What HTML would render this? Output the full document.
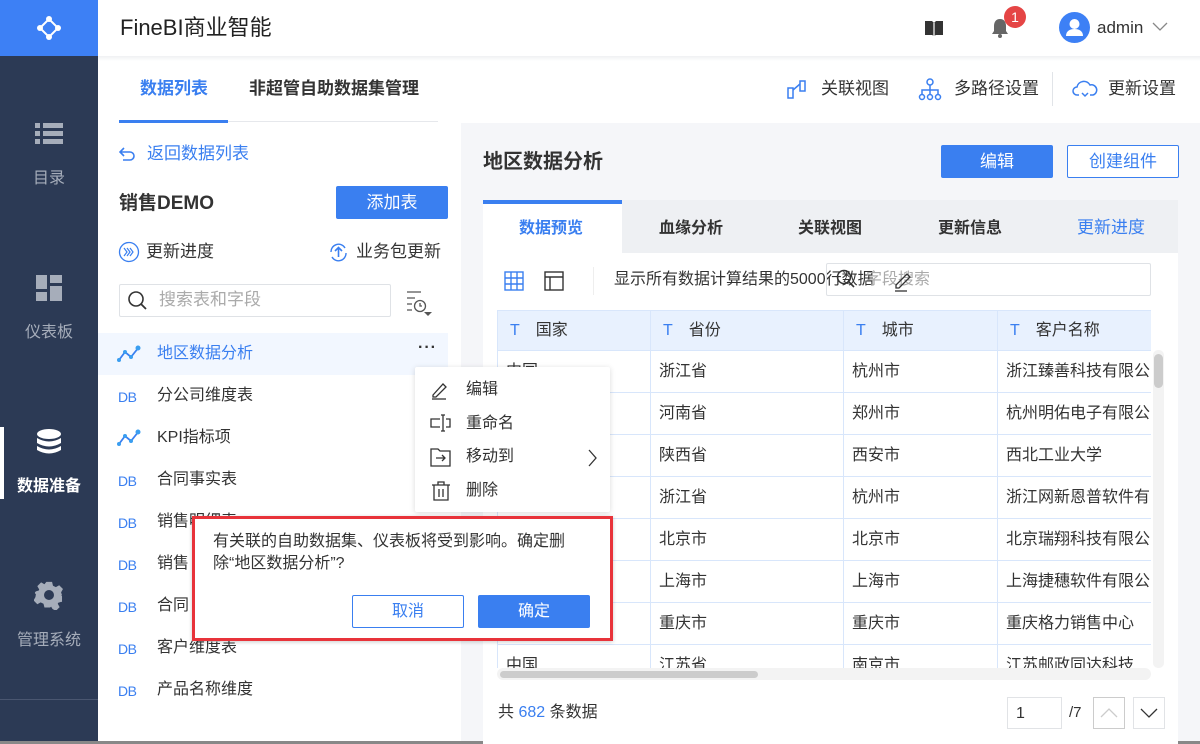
<!DOCTYPE html>
<html><head><meta charset="utf-8"><style>
*{margin:0;padding:0;box-sizing:border-box}
body{width:1200px;height:744px;overflow:hidden;position:relative;background:#fff;font-family:"Liberation Sans","Noto Sans CJK SC",sans-serif;color:#333;font-size:16px;line-height:1.2}
.a{position:absolute;white-space:nowrap}
.side{left:0;top:0;width:98px;height:744px;background:#2c3a55}
.logo{left:0;top:0;width:98px;height:56px;background:#3d80f5}
.nav{width:98px;text-align:center;color:#a6adba;font-size:16px}
.blue{color:#3a7ff0}
.row{left:98px;width:350px;height:42px}
.row .ic{position:absolute;left:20px;top:14px;font-size:14px;color:#3a7ff0;letter-spacing:-0.5px}
.row .t{position:absolute;left:59px;top:11px;font-size:16px;color:#333}
td{border:1px solid #d8e6fb;height:42px;padding-left:8px;font-size:16px;color:#333;white-space:nowrap;overflow:hidden}
th{border:1px solid #d8e6fb;height:40px;background:#e8f1fe;text-align:left;padding-left:12px;font-weight:normal;font-size:16px}
th b{color:#3a7ff0;font-weight:normal;margin-right:16px}
.btn{border-radius:2px;text-align:center}
</style></head><body>
<div class="a side"></div>
<div class="a logo"><svg width="98" height="56"><g fill="none" stroke="#fff" stroke-width="2"><path d="M40 28 L49 19 L58 28 L49 37 Z"/></g><g fill="#fff"><circle cx="40" cy="28" r="3"/><circle cx="49" cy="19" r="3"/><circle cx="58" cy="28" r="3"/><circle cx="49" cy="37" r="3"/></g></svg></div>
<svg class="a" style="left:35px;top:122px" width="28" height="24"><g fill="#a6adba"><rect x="0" y="1" width="5" height="5"/><rect x="8" y="1" width="20" height="5"/><rect x="0" y="9" width="5" height="5"/><rect x="8" y="9" width="20" height="5"/><rect x="0" y="17" width="5" height="5"/><rect x="8" y="17" width="20" height="5"/></g></svg>
<div class="a nav" style="top:169px">目录</div>
<svg class="a" style="left:36px;top:275px" width="26" height="26"><g fill="#a6adba"><rect x="0" y="0" width="11" height="14"/><rect x="14" y="0" width="12" height="8"/><rect x="0" y="17" width="11" height="9"/><rect x="14" y="11" width="12" height="15"/></g></svg>
<div class="a nav" style="top:323px">仪表板</div>
<div class="a" style="left:0;top:427px;width:4px;height:72px;background:#fff"></div>
<svg class="a" style="left:36px;top:429px" width="26" height="26"><g fill="#fff"><ellipse cx="13" cy="5" rx="12" ry="5"/><path d="M1 9 Q13 16 25 9 V14 Q13 21 1 14Z"/><path d="M1 17 Q13 24 25 17 V21 Q13 28 1 21Z"/></g></svg>
<div class="a nav" style="top:477px;color:#fff;font-weight:bold">数据准备</div>
<svg class="a" style="left:34px;top:580px" width="30" height="30" viewBox="0 0 30 30"><path fill="#a6adba" d="M12 2h6l1 4 3 1.5 3.5-2 4 4-2 3.5L28.5 16l-1 .5 1 .5v6h-1l-3 1-.5 1 2 3.5-4 4-3.5-2L17 28l-1 1h-6l-1-4-3-1.5-3.5 2-4-4 2-3.5L1 15l-1-1v-1l1-1 3-1 .5-1-2-3.5 4-4 3.5 2L12 2z" transform="scale(.95) translate(1,0)"/><circle cx="15" cy="15" r="5" fill="#2c3a55"/></svg>
<div class="a nav" style="top:631px">管理系统</div>
<div class="a" style="left:0;top:699px;width:98px;height:1px;background:#4a5670"></div>
<div class="a" style="left:0;top:741px;width:1200px;height:3px;background:#888"></div>

<div class="a" style="left:120px;top:15px;font-size:22px;color:#222">FineBI商业智能</div>
<svg class="a" style="left:924px;top:19px" width="20" height="18"><path d="M1 2h7l2 2 2-2h7v14h-7l-2 1-2-1H1z" fill="#333"/><path d="M10 4v13" stroke="#fff" stroke-width="1.2"/></svg>
<svg class="a" style="left:990px;top:17px" width="20" height="22"><path d="M10 2c-4 0-6 3-6 7v5l-2 3h16l-2-3V9c0-4-2-7-6-7z" fill="#666"/><circle cx="10" cy="19" r="2" fill="#666"/></svg>
<div class="a" style="left:1004px;top:6px;width:22px;height:22px;border-radius:11px;background:#e54545;color:#fff;font-size:14px;text-align:center;line-height:22px">1</div>
<div class="a" style="left:1059px;top:12px;width:31px;height:31px;border-radius:16px;background:#3d80f5"></div>
<svg class="a" style="left:1059px;top:12px" width="31" height="31"><circle cx="15.5" cy="12" r="5" fill="#fff"/><path d="M7 24c0-5 4-7 8.5-7s8.5 2 8.5 7z" fill="#fff"/></svg>
<div class="a" style="left:1097px;top:18px;font-size:17px;color:#333">admin</div>
<svg class="a" style="left:1152px;top:22px" width="16" height="10"><path d="M1 1l7 7 7-7" fill="none" stroke="#888" stroke-width="1.3"/></svg>
<div class="a" style="left:98px;top:56px;width:1102px;height:5px;background:linear-gradient(#f0f1f3,#fff)"></div>

<div class="a" style="left:140px;top:79px;font-size:17px;font-weight:bold;color:#3a7ff0">数据列表</div>
<div class="a" style="left:249px;top:79px;font-size:17px;font-weight:bold;color:#333">非超管自助数据集管理</div>
<div class="a" style="left:119px;top:121px;width:319px;height:1px;background:#e6e8ec"></div>
<div class="a" style="left:119px;top:120px;width:109px;height:3px;background:#3a7ff0"></div>
<svg class="a" style="left:786px;top:78px" width="22" height="22"><g fill="none" stroke="#3a7ff0" stroke-width="1.5"><rect x="2" y="10" width="5" height="10"/><rect x="14" y="3" width="5" height="10"/><path d="M7 12l7-6"/></g></svg>
<div class="a" style="left:821px;top:79px;font-size:17px">关联视图</div>
<svg class="a" style="left:918px;top:78px" width="24" height="24"><g fill="none" stroke="#3a7ff0" stroke-width="1.5"><circle cx="12" cy="4" r="3"/><circle cx="4" cy="19" r="2.5"/><circle cx="12" cy="19" r="2.5"/><circle cx="20" cy="19" r="2.5"/><path d="M12 7v9M4 16v-4h16v4"/></g></svg>
<div class="a" style="left:954px;top:79px;font-size:17px">多路径设置</div>
<div class="a" style="left:1052px;top:72px;width:1px;height:34px;background:#e1e4e8"></div>
<svg class="a" style="left:1072px;top:79px" width="26" height="20"><path d="M7 16H5a4 4 0 0 1 0-8 7 7 0 0 1 13-2 5 5 0 0 1 3 10h-3" fill="none" stroke="#3a7ff0" stroke-width="1.5"/><path d="M10 14l3 3 3-3" fill="none" stroke="#3a7ff0" stroke-width="1.5"/></svg>
<div class="a" style="left:1108px;top:79px;font-size:17px">更新设置</div>

<svg class="a" style="left:119px;top:146px" width="20" height="16"><path d="M5 2L1 6l4 4M1 6h10a4 4 0 0 1 0 8H4" fill="none" stroke="#3a7ff0" stroke-width="1.6"/></svg>
<div class="a blue" style="left:147px;top:144px;font-size:17px">返回数据列表</div>
<div class="a" style="left:119px;top:193px;font-size:19px;font-weight:bold;color:#333">销售DEMO</div>
<div class="a btn" style="left:336px;top:186px;width:112px;height:33px;background:#3a7ff0;color:#fff;font-size:17px;line-height:33px">添加表</div>
<svg class="a" style="left:118px;top:241px" width="22" height="22"><circle cx="11" cy="11" r="9.5" fill="none" stroke="#3a7ff0" stroke-width="1.3"/><path d="M6 7l3 4-3 4M9 7l3 4-3 4M12 7l3 4-3 4" fill="none" stroke="#3a7ff0" stroke-width="1.2"/></svg>
<div class="a" style="left:146px;top:242px;font-size:17px">更新进度</div>
<svg class="a" style="left:327px;top:241px" width="23" height="23"><path d="M4 11a7.5 7.5 0 0 1 14-4M19 12a7.5 7.5 0 0 1-14 4" fill="none" stroke="#3a7ff0" stroke-width="1.4"/><path d="M11.5 16V7M8 10l3.5-3.5L15 10" fill="none" stroke="#3a7ff0" stroke-width="1.6"/></svg>
<div class="a" style="left:356px;top:242px;font-size:17px">业务包更新</div>
<div class="a" style="left:119px;top:284px;width:272px;height:33px;border:1px solid #dfe2e6;border-radius:2px"></div>
<svg class="a" style="left:127px;top:290px" width="22" height="22"><circle cx="9" cy="9" r="7" fill="none" stroke="#333" stroke-width="1.6"/><path d="M14 14l5 5" stroke="#333" stroke-width="1.8"/></svg>
<div class="a" style="left:159px;top:290px;font-size:17px;color:#aaa">搜索表和字段</div>
<svg class="a" style="left:406px;top:290px" width="30" height="26"><g fill="none" stroke="#555" stroke-width="1.3"><path d="M1 2h14M1 8h8M1 14h5M1 20h5"/><circle cx="14" cy="16" r="5.5"/><path d="M14 13v3h2"/></g><path d="M18 22h8l-4 4z" fill="#555"/></svg>

<div class="a" style="left:98px;top:333px;width:350px;height:42px;background:#f2f7ff"></div>
<div class="a row" style="top:333px"><svg style="position:absolute;left:19px;top:12px" width="24" height="18"><path d="M2 15l6-8 6 5 8-10" fill="none" stroke="#3a7ff0" stroke-width="1.8"/><g fill="#3a9ef0"><circle cx="2" cy="15" r="2"/><circle cx="8" cy="7" r="2"/><circle cx="14" cy="12" r="2"/><circle cx="21" cy="3" r="2.5"/></g></svg><span class="t blue" style="color:#3a7ff0">地区数据分析</span><span class="t blue" style="left:320px;top:5px;font-weight:bold;letter-spacing:1px">···</span></div>
<div class="a row" style="top:375px"><span class="ic">DB</span><span class="t">分公司维度表</span></div>
<div class="a row" style="top:417px"><svg style="position:absolute;left:19px;top:12px" width="24" height="18"><path d="M2 15l6-8 6 5 8-10" fill="none" stroke="#3a7ff0" stroke-width="1.8"/><g fill="#3a9ef0"><circle cx="2" cy="15" r="2"/><circle cx="8" cy="7" r="2"/><circle cx="14" cy="12" r="2"/><circle cx="21" cy="3" r="2.5"/></g></svg><span class="t">KPI指标项</span></div>
<div class="a row" style="top:459px"><span class="ic">DB</span><span class="t">合同事实表</span></div>
<div class="a row" style="top:501px"><span class="ic">DB</span><span class="t">销售明细表</span></div>
<div class="a row" style="top:543px"><span class="ic">DB</span><span class="t">销售</span></div>
<div class="a row" style="top:585px"><span class="ic">DB</span><span class="t">合同</span></div>
<div class="a row" style="top:627px"><span class="ic">DB</span><span class="t">客户维度表</span></div>
<div class="a row" style="top:669px"><span class="ic">DB</span><span class="t">产品名称维度</span></div>

<div class="a" style="left:461px;top:123px;width:739px;height:618px;background:#f5f6f9"></div>
<div class="a" style="left:483px;top:150px;font-size:20px;font-weight:bold;color:#333">地区数据分析</div>
<div class="a btn" style="left:941px;top:145px;width:112px;height:33px;background:#3a7ff0;color:#fff;font-size:17px;line-height:33px">编辑</div>
<div class="a btn" style="left:1067px;top:145px;width:112px;height:33px;border:1px solid #3a7ff0;background:#fff;color:#3a7ff0;font-size:17px;line-height:31px">创建组件</div>
<div class="a" style="left:483px;top:200px;width:695px;height:53px;background:#eef0f3"></div>
<div class="a" style="left:483px;top:200px;width:139px;height:53px;background:#fff;border-top:4px solid #3a7ff0"></div>
<div class="a" style="left:519px;top:219px;font-size:16px;font-weight:bold;color:#3a7ff0">数据预览</div>
<div class="a" style="left:659px;top:219px;font-size:16px;font-weight:bold">血缘分析</div>
<div class="a" style="left:798px;top:219px;font-size:16px;font-weight:bold">关联视图</div>
<div class="a" style="left:938px;top:219px;font-size:16px;font-weight:bold">更新信息</div>
<div class="a blue" style="left:1077px;top:218px;font-size:17px">更新进度</div>
<div class="a" style="left:483px;top:253px;width:695px;height:491px;background:#fff"></div>
<svg class="a" style="left:504px;top:271px" width="20" height="20"><g fill="none" stroke="#3a7ff0" stroke-width="1.4"><rect x="1" y="1" width="18" height="18"/><path d="M7 1v18M13 1v18M1 7h18M1 13h18"/></g></svg>
<svg class="a" style="left:544px;top:271px" width="20" height="20"><g fill="none" stroke="#333" stroke-width="1.4"><rect x="1" y="1" width="18" height="18"/><path d="M1 6h18M6 6v13"/></g></svg>
<div class="a" style="left:593px;top:267px;width:1px;height:28px;background:#eee"></div>
<div class="a" style="left:614px;top:270px;font-size:16px">显示所有数据计算结果的5000行数据</div>
<div class="a" style="left:826px;top:263px;width:325px;height:33px;border:1px solid #dfe2e6;border-radius:2px"></div>
<svg class="a" style="left:836px;top:269px" width="20" height="20"><circle cx="8" cy="8" r="6.5" fill="none" stroke="#333" stroke-width="1.5"/><path d="M13 13l5 5" stroke="#333" stroke-width="1.6"/></svg>
<div class="a" style="left:866px;top:270px;font-size:16px;color:#aaa">字段搜索</div>
<svg class="a" style="left:893px;top:270px" width="20" height="22"><path d="M3 15L14 4l3 3L6 18H3z" fill="none" stroke="#333" stroke-width="1.3"/><path d="M2 21h12" stroke="#333" stroke-width="1.3"/></svg>

<div class="a" style="left:497px;top:310px;width:654px;height:358px;overflow:hidden">
<table style="border-collapse:collapse;width:680px;table-layout:fixed">
<colgroup><col style="width:153px"><col style="width:193px"><col style="width:154px"><col style="width:180px"></colgroup>
<tr><th><b>T</b>国家</th><th><b>T</b>省份</th><th><b>T</b>城市</th><th><b>T</b>客户名称</th></tr>
<tr><td>中国</td><td>浙江省</td><td>杭州市</td><td>浙江臻善科技有限公司</td></tr>
<tr><td>中国</td><td>河南省</td><td>郑州市</td><td>杭州明佑电子有限公司</td></tr>
<tr><td>中国</td><td>陕西省</td><td>西安市</td><td>西北工业大学</td></tr>
<tr><td>中国</td><td>浙江省</td><td>杭州市</td><td>浙江网新恩普软件有限</td></tr>
<tr><td>中国</td><td>北京市</td><td>北京市</td><td>北京瑞翔科技有限公司</td></tr>
<tr><td>中国</td><td>上海市</td><td>上海市</td><td>上海捷穗软件有限公司</td></tr>
<tr><td>中国</td><td>重庆市</td><td>重庆市</td><td>重庆格力销售中心</td></tr>
<tr><td>中国</td><td>江苏省</td><td>南京市</td><td>江苏邮政同达科技</td></tr>
</table></div>
<div class="a" style="left:1153px;top:350px;width:11px;height:318px;background:#f3f3f3;border-radius:5px"></div>
<div class="a" style="left:1154px;top:354px;width:9px;height:34px;background:#ccc;border-radius:5px"></div>
<div class="a" style="left:497px;top:668px;width:654px;height:12px;background:#f3f3f3;border-radius:6px"></div>
<div class="a" style="left:500px;top:671px;width:258px;height:7px;background:#ccc;border-radius:4px"></div>
<div class="a" style="left:498px;top:703px;font-size:16px">共 <span class="blue">682</span> 条数据</div>
<div class="a" style="left:1007px;top:697px;width:55px;height:32px;border:1px solid #e1e3e6;padding:6px 0 0 8px;font-size:16px">1</div>
<div class="a" style="left:1069px;top:704px;font-size:15px">/7</div>
<div class="a" style="left:1093px;top:697px;width:32px;height:32px;border:1px solid #ccc"></div>
<svg class="a" style="left:1100px;top:708px" width="18" height="10"><path d="M1 9l8-8 8 8" fill="none" stroke="#ccc" stroke-width="1.3"/></svg>
<div class="a" style="left:1133px;top:697px;width:32px;height:32px;border:1px solid #e1e3e6"></div>
<svg class="a" style="left:1140px;top:708px" width="18" height="10"><path d="M1 1l8 8 8-8" fill="none" stroke="#333" stroke-width="1.3"/></svg>

<div class="a" style="left:415px;top:367px;width:195px;height:145px;background:#fff;box-shadow:0 1px 6px rgba(0,0,0,.15);border-radius:2px"></div>
<svg class="a" style="left:430px;top:380px" width="20" height="20"><path d="M3 15L13 4l3 3L6 17H3z" fill="none" stroke="#333" stroke-width="1.3"/><path d="M2 19h14" stroke="#333" stroke-width="1.3"/></svg>
<div class="a" style="left:466px;top:380px;font-size:16px">编辑</div>
<svg class="a" style="left:430px;top:414px" width="22" height="20"><g fill="none" stroke="#333" stroke-width="1.3"><path d="M10 5H1v8h9M16 5h4v8h-4M11 1h4M11 17h4M13 1v16"/></g></svg>
<div class="a" style="left:466px;top:414px;font-size:16px">重命名</div>
<svg class="a" style="left:430px;top:447px" width="22" height="20"><g fill="none" stroke="#333" stroke-width="1.3"><path d="M1 2h7l2 2h10v15H1z"/><path d="M6 11h9M12 8l3 3-3 3"/></g></svg>
<div class="a" style="left:466px;top:447px;font-size:16px">移动到</div>
<svg class="a" style="left:588px;top:449px" width="10" height="18"><path d="M1 1l7 8-7 8" fill="none" stroke="#333" stroke-width="1.3"/></svg>
<svg class="a" style="left:431px;top:480px" width="20" height="21"><g fill="none" stroke="#333" stroke-width="1.3"><path d="M1 5h18M7 5V2h6v3M3 5v15h14V5M8 9v8M12 9v8"/></g></svg>
<div class="a" style="left:466px;top:481px;font-size:16px">删除</div>

<div class="a" style="left:192px;top:516px;width:421px;height:125px;border:3px solid #e8333a;background:#fff;box-shadow:0 1px 4px rgba(0,0,0,.2)"></div>
<div class="a" style="left:213px;top:531px;font-size:16px;line-height:22px;white-space:normal;width:380px">有关联的自助数据集、仪表板将受到影响。确定删除“地区数据分析”?</div>
<div class="a btn" style="left:352px;top:595px;width:112px;height:33px;border:1px solid #3a7ff0;color:#3a7ff0;font-size:16px;line-height:31px;background:#fff">取消</div>
<div class="a btn" style="left:478px;top:595px;width:112px;height:33px;background:#3a7ff0;color:#fff;font-size:16px;line-height:33px">确定</div>
</body></html>
